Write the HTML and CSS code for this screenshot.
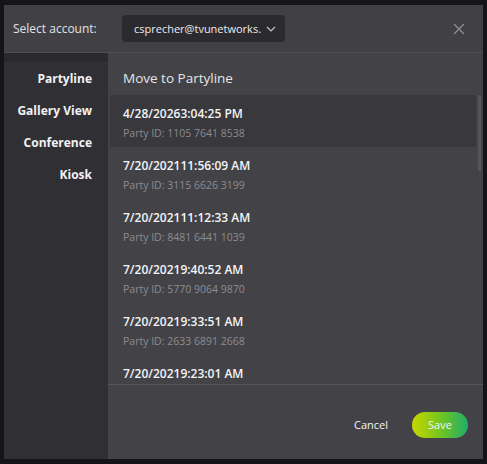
FILE: index.html
```html
<!DOCTYPE html>
<html lang="en">
<head>
    <meta charset="UTF-8">
    <meta name="viewport" content="width=device-width, initial-scale=1.0">
    <title>Move to Partyline</title>
    <link rel="stylesheet" href="styles.css">
</head>
<body>
    <div class="dialog">
        <!-- account picker -->
        <div class="dlg-head">
            <span class="label">Select account:</span>
            <div class="account-select">
                <span class="account-text">csprecher@tvunetworks.com</span>
                <svg class="chevron" width="10" height="6" viewBox="0 0 10 6"><path d="M1 1l4 4 4-4" fill="none" stroke="#c8c8cc" stroke-width="1.2"/></svg>
            </div>
            <svg class="close" width="12" height="12" viewBox="0 0 12 12"><path d="M1 1l10 10M11 1L1 11" stroke="#8e8e94" stroke-width="1.3"/></svg>
        </div>

        <div class="dlg-body">
            <nav class="side">
                <div class="side-top"></div>
                <a class="side-item">Partyline</a>
                <a class="side-item">Gallery View</a>
                <a class="side-item">Conference</a>
                <a class="side-item">Kiosk</a>
            </nav>

            <div class="main">
                <h2>Move to Partyline</h2>
                <div class="list-wrap">
                    <ul class="party-list">
                        <li class="active">
                            <div class="date">4/28/20263:04:25 PM</div>
                            <div class="pid">Party ID: 1105 7641 8538</div>
                        </li>
                        <li>
                            <div class="date">7/20/202111:56:09 AM</div>
                            <div class="pid">Party ID: 3115 6626 3199</div>
                        </li>
                        <li>
                            <div class="date">7/20/202111:12:33 AM</div>
                            <div class="pid">Party ID: 8481 6441 1039</div>
                        </li>
                        <li>
                            <div class="date">7/20/20219:40:52 AM</div>
                            <div class="pid">Party ID: 5770 9064 9870</div>
                        </li>
                        <li>
                            <div class="date">7/20/20219:33:51 AM</div>
                            <div class="pid">Party ID: 2633 6891 2668</div>
                        </li>
                        <li>
                            <div class="date">7/20/20219:23:01 AM</div>
                        </li>
                    </ul>
                    <div class="thumb"></div>
                </div>
                <div class="dlg-foot">
                    <button class="btn-cancel">Cancel</button>
                    <button class="btn-save">Save</button>
                </div>
            </div>
        </div>
    </div>
</body>
</html>
```

FILE: styles.css
```css
body {
    margin: 0;
    background: #151517;
    font-family: "Open Sans", "Liberation Sans", sans-serif;
    color: #e8e8ea;
}

.dialog {
    margin: 5px 4px;
    height: 454px;
    background: #414145;
    display: flex;
    flex-direction: column;
    overflow: hidden;
}

.dlg-head {
    height: 47px;
    display: flex;
    align-items: center;
    padding: 0 0 0 9px;
    border-bottom: 1px solid #4e4e53;
    flex-shrink: 0;
}

.label {
    font-size: 12px;
    color: #e2e2e4;
    width: 109px;
}

.account-select {
    width: 163px;
    height: 27px;
    box-sizing: border-box;
    background: #2b2b2f;
    border-radius: 4px;
    display: flex;
    align-items: center;
    padding: 0 9px 0 12px;
    gap: 5px;
}

.account-text {
    font-size: 11px;
    color: #ececee;
    white-space: nowrap;
    overflow: hidden;
    flex: 1;
}

.close {
    margin-left: auto;
    margin-right: 18px;
}

.dlg-body {
    flex: 1;
    display: flex;
    min-height: 0;
}

.side {
    width: 104px;
    background: #303034;
    display: flex;
    flex-direction: column;
    align-items: flex-end;
    padding-right: 16px;
    box-sizing: border-box;
    position: relative;
}

.side-top {
    position: absolute;
    top: 0;
    left: 0;
    right: 0;
    height: 9px;
    background: #2a2a2e;
}

.side-item {
    font-size: 12px;
    font-weight: 700;
    color: #f2f2f4;
    line-height: 32px;
}

.side-item:first-of-type {
    margin-top: 10px;
}

.main {
    flex: 1;
    background: #434347;
    display: flex;
    flex-direction: column;
    min-width: 0;
}

.main h2 {
    margin: 0;
    font-size: 13.5px;
    font-weight: 400;
    color: #e6e6e8;
    padding: 16px 0 0 15px;
    height: 26px;
}

.list-wrap {
    height: 289px;
    overflow: hidden;
    position: relative;
    border-bottom: 1px solid #56565b;
}

.party-list {
    list-style: none;
    margin: 0;
    padding: 0 7px 0 2px;
}

.party-list li {
    height: 52px;
    padding: 10px 0 0 13px;
    box-sizing: border-box;
}

.party-list li.active {
    background: #38383d;
}

.date {
    font-size: 12px;
    font-weight: 600;
    color: #f4f4f6;
    line-height: 18px;
}

.pid {
    font-size: 10.5px;
    color: #8c8c91;
    line-height: 18px;
    margin-top: 1px;
}

.thumb {
    position: absolute;
    right: 2px;
    top: 0;
    width: 3px;
    height: 76px;
    background: #55555a;
    border-radius: 2px;
}

.dlg-foot {
    flex: 1;
    display: flex;
    align-items: center;
    justify-content: flex-end;
    padding: 6px 15px 0 0;
    gap: 24px;
}

.dlg-foot button {
    font-family: inherit;
    font-size: 11px;
    line-height: 16px;
    border: none;
    color: #f4f4f6;
    cursor: pointer;
}

.btn-cancel {
    background: none;
    padding: 0;
}

.btn-save {
    width: 56px;
    height: 26px;
    border-radius: 13px;
    background: linear-gradient(90deg, #c9d600 0%, #74c51e 50%, #1fae6c 100%);
}
```
